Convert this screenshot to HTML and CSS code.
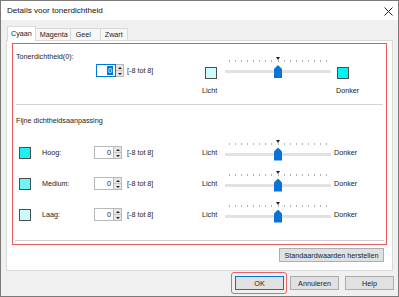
FILE: index.html
```html
<!DOCTYPE html>
<html lang="nl">

<head>
  <meta charset="UTF-8">
  <title>Details voor tonerdichtheid</title>
  <link rel="stylesheet" href="styles.css">
</head>

<body>
  <div class="window">
    <!-- Title bar -->
    <div class="titlebar">
      <span class="title">Details voor tonerdichtheid</span>
      <svg class="close" width="9" height="9" viewBox="0 0 9 9">
        <path d="M0.5 0.5 L8.5 8.5 M8.5 0.5 L0.5 8.5" stroke="#222" stroke-width="1" fill="none" />
      </svg>
    </div>

    <div class="body">
      <div class="tabs">
        <div class="tab active">Cyaan</div>
        <div class="tab">Magenta</div>
        <div class="tab">Geel</div>
        <div class="tab">Zwart</div>
      </div>

      <div class="panel">
        <div class="highlight">
          <!-- Overall density -->
          <div class="top">
            <div class="top-left">
              <div class="caption">Tonerdichtheid(0):</div>
              <div class="spin-line">
                <div class="spin focused">
                  <div class="spin-val"><span class="sel">0</span></div>
                  <div class="spin-btns"><span class="up"></span><span class="down"></span></div>
                </div>
                <span class="range">[-8 tot 8]</span>
              </div>
            </div>
            <div class="top-right">
              <div class="swatch light first"></div>
              <div class="slider"></div>
              <div class="swatch dark"></div>
              <div class="lbl">Licht</div>
              <div></div>
              <div class="lbl donker">Donker</div>
            </div>
          </div>

          <div class="sep"></div>

          <div class="caption fine">Fijne dichtheidsaanpassing</div>

          <div class="rows">
            <div class="swatch hoog"></div>
            <div class="lbl">Hoog:</div>
            <div class="spin">
              <div class="spin-val">0</div>
              <div class="spin-btns"><span class="up"></span><span class="down"></span></div>
            </div>
            <div class="range">[-8 tot 8]</div>
            <div class="lbl">Licht</div>
            <div class="slider"></div>
            <div class="lbl">Donker</div>

            <div class="swatch medium"></div>
            <div class="lbl">Medium:</div>
            <div class="spin">
              <div class="spin-val">0</div>
              <div class="spin-btns"><span class="up"></span><span class="down"></span></div>
            </div>
            <div class="range">[-8 tot 8]</div>
            <div class="lbl">Licht</div>
            <div class="slider"></div>
            <div class="lbl">Donker</div>

            <div class="swatch light"></div>
            <div class="lbl">Laag:</div>
            <div class="spin">
              <div class="spin-val">0</div>
              <div class="spin-btns"><span class="up"></span><span class="down"></span></div>
            </div>
            <div class="range">[-8 tot 8]</div>
            <div class="lbl">Licht</div>
            <div class="slider"></div>
            <div class="lbl">Donker</div>
          </div>

          <div class="bottom-line"></div>
        </div>

        <div class="reset-line">
          <button class="btn reset">Standaardwaarden herstellen</button>
        </div>
      </div>

      <div class="footer">
        <span class="ok-mark"><button class="btn ok">OK</button></span>
        <button class="btn">Annuleren</button>
        <button class="btn help">Help</button>
      </div>
    </div>
  </div>

  <script>
    // build the trackbar pieces: 17 ticks (-8..8), the center marker and the thumb
    document.querySelectorAll('.slider').forEach(slider => {
      const mark = document.createElement('span');
      mark.className = 'mark';
      slider.appendChild(mark);

      const ticks = document.createElement('div');
      ticks.className = 'ticks';
      for (let i = 0; i < 17; i++) {
        ticks.appendChild(document.createElement('i'));
      }
      slider.appendChild(ticks);

      const track = document.createElement('div');
      track.className = 'track';
      slider.appendChild(track);

      const thumb = document.createElement('span');
      thumb.className = 'thumb';
      slider.appendChild(thumb);
    });
  </script>
</body>

</html>
```

FILE: styles.css
```css
html,
body {
  margin: 0;
  padding: 0;
}

body {
  width: 399px;
  height: 297px;
  overflow: hidden;
  font-family: "Liberation Sans", Arial, sans-serif;
  font-size: 7.2px;
  color: #222;
}

.window {
  width: 399px;
  height: 297px;
  box-sizing: border-box;
  border: 1px solid #7a7a7a;
  background: #f0f0f0;
  display: flex;
  flex-direction: column;
}

/* title bar */
.titlebar {
  height: 19px;
  background: #fff;
  display: flex;
  align-items: center;
  justify-content: space-between;
  padding: 0 5px 0 6px;
}

.title {
  font-size: 8.1px;
  color: #111;
}

.close {
  display: block;
  margin-top: 1px;
}

.body {
  flex: 1;
  display: flex;
  flex-direction: column;
  padding: 6px 5px 0 5px;
}

/* tabs */
.tabs {
  height: 14px;
  display: flex;
  align-items: flex-end;
  padding-left: 1px;
  position: relative;
  z-index: 1;
}

.tab {
  height: 12px;
  line-height: 12px;
  padding: 0 4px;
  border: 1px solid #d9d9d9;
  border-bottom: none;
  margin-left: -1px;
  background: #f7f7f7;
  box-sizing: border-box;
}

.tab.active {
  height: 15px;
  line-height: 13px;
  margin-bottom: -1px;
  background: #fff;
  padding: 0 3px;
  margin-left: 0;
  position: relative;
  z-index: 2;
}

.tab:nth-child(2) {
  padding: 0 4px 0 4px;
  width: 36px;
}

.tab:nth-child(3) {
  width: 31px;
  padding-left: 5px;
}

.tab:nth-child(4) {
  width: 28px;
  padding-left: 4px;
}

/* tab page */
.panel {
  height: 231px;
  box-sizing: border-box;
  background: #fff;
  border: 1px solid #d9d9d9;
  padding: 2px 5px 0 5px;
}

.highlight {
  height: 202px;
  box-sizing: border-box;
  border: 1px solid #e85a5c;
  padding: 8px 0 2px 0;
}

.caption {
  height: 10px;
  line-height: 10px;
  padding-left: 3px;
}

.top {
  height: 44px;
  display: flex;
}

.top-left {
  width: 189px;
}

.spin-line {
  display: flex;
  align-items: center;
  margin: 2px 0 0 83px;
}

.spin-line .range {
  margin-left: 3px;
}

.top-right {
  margin-top: 4px;
  display: grid;
  grid-template-columns: 23px 112px auto;
  grid-template-rows: 28px 10px;
  row-gap: 2px;
  align-items: start;
}

.top-right .swatch {
  margin-top: 11px;
}

.top-right .swatch.first {
  margin-left: 3px;
}

.top-right .lbl {
  line-height: 10px;
}

.top-right .donker {
  margin-left: -1px;
}

.sep {
  height: 1px;
  background: #d4d4d4;
  margin: 8px 3px 0 3px;
}

.caption.fine {
  margin-top: 11px;
}

/* fine adjustment rows */
.rows {
  margin-top: 11px;
  display: grid;
  grid-template-columns: 23px 52px 33px 75px 23px 109px auto;
  grid-auto-rows: 31px;
  align-items: center;
  padding-left: 6px;
}

.bottom-line {
  height: 1px;
  background: #d0d0d0;
  margin: 10px 2px 0 2px;
}

/* colour boxes */
.swatch {
  width: 12px;
  height: 12px;
  box-sizing: border-box;
  border: 1px solid #4d4d4d;
}

.swatch.dark {
  background: #00f4f4;
}

.swatch.hoog {
  background: #1cf2f2;
}

.swatch.medium {
  background: #6df6f6;
}

.swatch.light {
  background: #cdfcfc;
}

/* numeric up-down */
.spin {
  width: 28px;
  height: 13px;
  display: flex;
}

.spin-val {
  flex: 1;
  box-sizing: border-box;
  border: 1px solid #b8b8b8;
  text-align: right;
  padding-right: 2px;
  line-height: 11px;
  background: #fff;
}

.spin.focused .spin-val {
  border-color: #0078d7;
}

.sel {
  background: #0078d7;
  color: #fff;
  padding: 0 1px;
}

.spin-btns {
  width: 8px;
  display: flex;
  flex-direction: column;
  border: 1px solid #b8b8b8;
  border-left: none;
  box-sizing: border-box;
  background: #e6e6e6;
}

.spin-btns span {
  flex: 1;
  display: flex;
  align-items: center;
  justify-content: center;
}

.spin-btns .up {
  border-bottom: 1px solid #c8c8c8;
}

.spin-btns .up::after {
  content: "";
  border-left: 2px solid transparent;
  border-right: 2px solid transparent;
  border-bottom: 2px solid #222;
}

.spin-btns .down::after {
  content: "";
  border-left: 2px solid transparent;
  border-right: 2px solid transparent;
  border-top: 2px solid #222;
}

/* trackbar */
.slider {
  position: relative;
  width: 106px;
  height: 28px;
}

.slider .mark {
  position: absolute;
  top: 1px;
  left: 51px;
  border-left: 2px solid transparent;
  border-right: 2px solid transparent;
  border-top: 3px solid #222;
}

.slider .ticks {
  position: absolute;
  top: 4px;
  left: 4px;
  right: 4px;
  height: 2px;
  display: flex;
  justify-content: space-between;
}

.slider .ticks i {
  width: 1px;
  height: 2px;
  background: #b4b4b4;
}

.slider .track {
  position: absolute;
  top: 14px;
  left: 0;
  right: 0;
  height: 3px;
  background: #e2e2e2;
}

.slider .thumb {
  position: absolute;
  top: 9px;
  left: 49px;
  width: 8px;
  height: 13px;
  background: #0a74d6;
  clip-path: polygon(50% 0, 100% 30%, 100% 100%, 0 100%, 0 30%);
}

/* buttons */
.reset-line {
  display: flex;
  justify-content: flex-end;
  margin: 3px 3px 0 0;
}

.btn {
  font-family: inherit;
  font-size: 7.2px;
  color: #222;
  height: 14px;
  width: 49px;
  padding: 0;
  box-sizing: border-box;
  background: #e1e1e1;
  border: 1px solid #adadad;
  border-radius: 0;
}

.btn.reset {
  width: 105px;
}

.footer {
  height: 25px;
  display: flex;
  align-items: center;
  justify-content: flex-end;
  padding: 0 0 1px 0;
  box-sizing: border-box;
  margin-right: -1px;
}

.ok-mark {
  display: flex;
  padding: 3px 2px 3px 3px;
  border: 1px solid #e46467;
  border-radius: 3px;
  margin-right: 3px;
}

.btn.ok {
  border-color: #0078d7;
}

.btn.help {
  margin-left: 6px;
}
```
